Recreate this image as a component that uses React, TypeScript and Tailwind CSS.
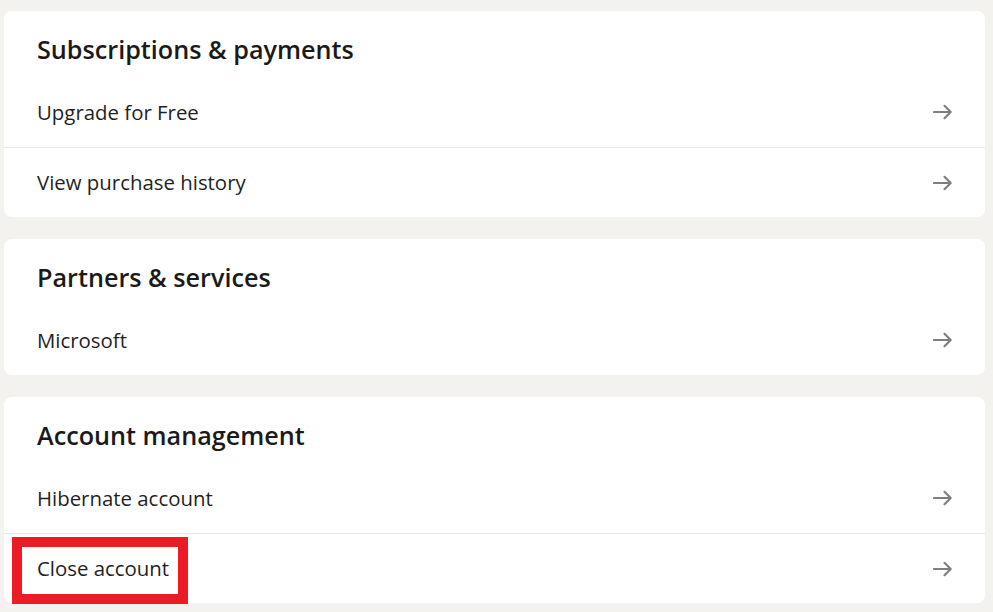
type Section = {
  title: string
  items: string[]
}

const sections: Section[] = [
  { title: 'Subscriptions & payments', items: ['Upgrade for Free', 'View purchase history'] },
  { title: 'Partners & services', items: ['Microsoft'] },
  { title: 'Account management', items: ['Hibernate account', 'Close account'] },
]

function Arrow() {
  return (
    <svg width="20" height="16" viewBox="0 0 20 16" fill="none" className="mr-[-1px]">
      <path d="M1 8H17" stroke="#7f7f7f" strokeWidth="2.2" strokeLinecap="round" />
      <path d="M11.5 1.8L17.7 8L11.5 14.2" stroke="#7f7f7f" strokeWidth="2.2" strokeLinecap="round" strokeLinejoin="round" />
    </svg>
  )
}

function Row({ label, first, highlight }: { label: string; first: boolean; highlight?: boolean }) {
  return (
    <div
      className={`relative flex h-[70px] items-center justify-between pl-[33px] pr-[33px] ${
        first ? '' : 'border-t border-[#e8e8e8]'
      }`}
    >
      <span className="text-[20.4px] text-[#1f1f1f]">{label}</span>
      <Arrow />
      {highlight && (
        <div className="absolute left-[8px] top-[3px] h-[67px] w-[176px] border-[10px] border-[#ed1c24]" />
      )}
    </div>
  )
}

export default function App() {
  return (
    <div
      className="min-h-[612px] w-full bg-[#f3f2ef] pt-[11px] pl-[4px] pr-[8px]"
      style={{ fontFamily: '"Open Sans", "Noto Sans", sans-serif' }}
    >
      <div className="flex flex-col gap-[22px]">
        {sections.map((section) => (
          <div key={section.title} className="rounded-[8px] bg-white">
            <div className="flex h-[66px] items-end pl-[33px] pb-[8px]">
              <h2 className="text-[25.2px] font-semibold text-[#1a1a1a]">{section.title}</h2>
            </div>
            {section.items.map((item, i) => (
              <Row key={item} label={item} first={i === 0} highlight={item === 'Close account'} />
            ))}
          </div>
        ))}
      </div>
    </div>
  )
}
